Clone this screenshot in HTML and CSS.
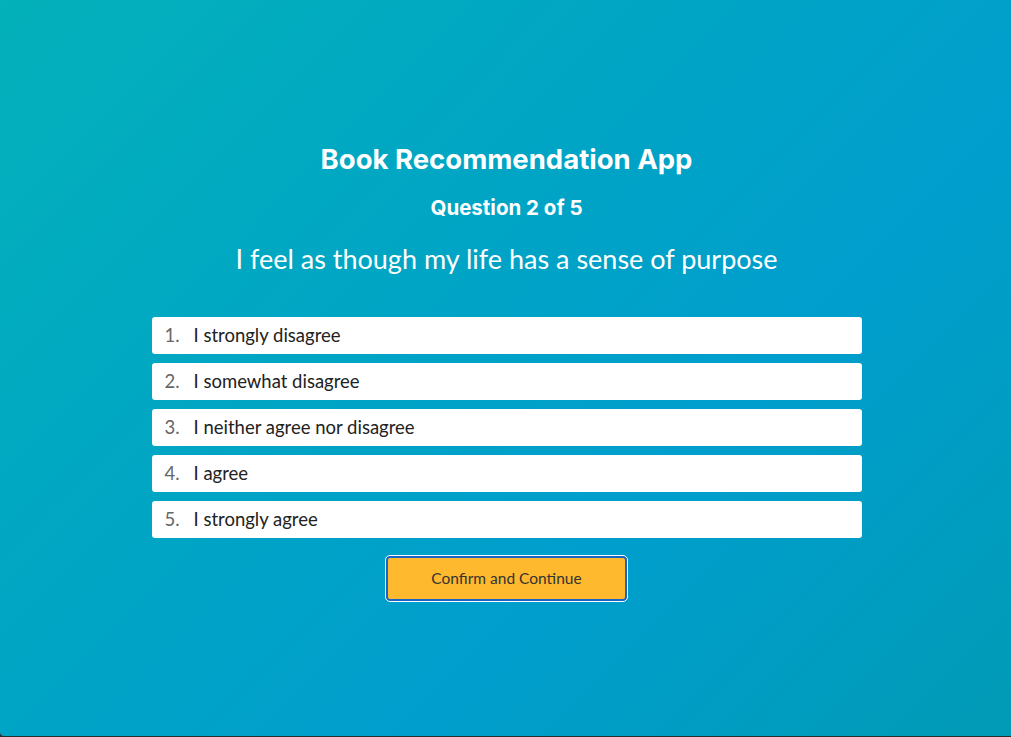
FILE: index.html
```html
<!DOCTYPE html>
<html lang="en">
<head>
<meta charset="utf-8">
<title>Book Recommendation App</title>
<link rel="stylesheet" href="styles.css">
</head>
<body>
<div class="app">
  <main class="quiz">
    <h1 class="title">Book Recommendation App</h1>
    <h2 class="progress">Question 2 of 5</h2>
    <p class="question">I feel as though my life has a sense of purpose</p>
    <ol class="options">
      <li class="option"><span class="num">1.</span><span class="label">I strongly disagree</span></li>
      <li class="option"><span class="num">2.</span><span class="label">I somewhat disagree</span></li>
      <li class="option"><span class="num">3.</span><span class="label">I neither agree nor disagree</span></li>
      <li class="option"><span class="num">4.</span><span class="label">I agree</span></li>
      <li class="option"><span class="num">5.</span><span class="label">I strongly agree</span></li>
    </ol>
    <button class="confirm" type="button">Confirm and Continue</button>
  </main>
</div>
</body>
</html>
```
FILE: styles.css
```css
html, body {
  margin: 0;
  padding: 0;
  background: #2a2a2a;
}
.app {
  height: 736px;
  display: flex;
  align-items: center;
  justify-content: center;
  padding-left: 2px;
  box-sizing: border-box;
  background: linear-gradient(135deg, #03b1ba 0%, #00a3c6 45%, #009ecd 65%, #019bb6 100%);
  border-bottom-left-radius: 4px;
}
.quiz {
  width: 710px;
  display: flex;
  flex-direction: column;
  align-items: center;
  margin-top: 6px;
}
.title {
  margin: 0;
  font-family: Inter, "Liberation Sans", sans-serif;
  font-weight: 700;
  font-size: 27.5px;
  line-height: 34px;
  color: #fff;
}
.progress {
  margin: 19px 0 0;
  font-family: Inter, "Liberation Sans", sans-serif;
  font-weight: 700;
  font-size: 20.5px;
  line-height: 26px;
  color: #fff;
}
.question {
  margin: 21px 0 0;
  font-family: Lato, "Noto Sans", sans-serif;
  font-size: 27px;
  line-height: 34px;
  color: #fff;
}
.options {
  list-style: none;
  margin: 41px 0 0;
  padding: 0;
  width: 710px;
  display: flex;
  flex-direction: column;
  gap: 9px;
}
.option {
  height: 37px;
  background: #fff;
  border-radius: 3px;
  display: flex;
  align-items: center;
  padding: 0 0 0 13px;
  font-family: Lato, "Noto Sans", sans-serif;
  font-size: 18.5px;
  color: #222;
}
.num {
  width: 29px;
  color: #666;
}
.confirm {
  margin-top: 18px;
  width: 241px;
  height: 45px;
  background: #ffb92e;
  border: 2px solid #1a63c9;
  outline: 1px solid #fff;
  border-radius: 4px;
  font-family: Lato, "Noto Sans", sans-serif;
  font-size: 15.5px;
  color: #333;
}
```
